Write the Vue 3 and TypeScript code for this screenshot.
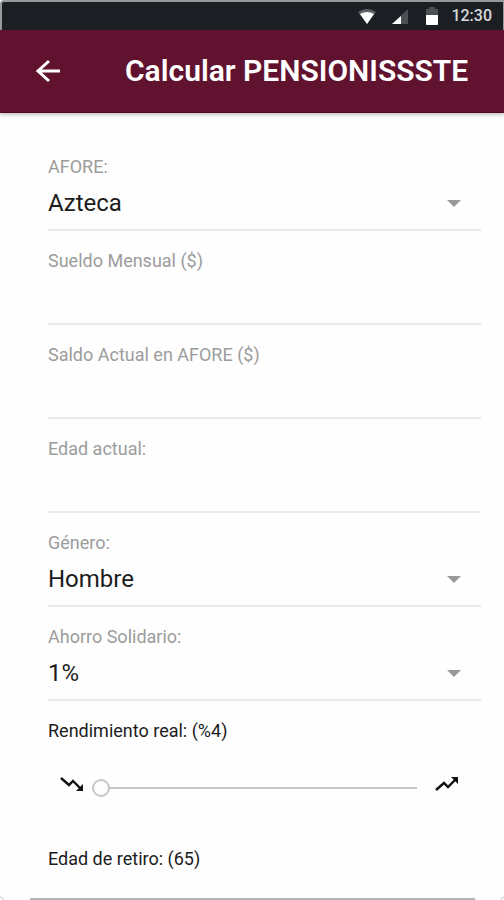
<script setup lang="ts">
import { ref } from 'vue'

interface SelectField {
  kind: 'select'
  id: string
  label: string
  options: string[]
}
interface InputField {
  kind: 'input'
  id: string
  label: string
}
type Field = SelectField | InputField

const fields: Field[] = [
  { kind: 'select', id: 'afore', label: 'AFORE:', options: ['Azteca'] },
  { kind: 'input', id: 'sueldo', label: 'Sueldo Mensual ($)' },
  { kind: 'input', id: 'saldo', label: 'Saldo Actual en AFORE ($)' },
  { kind: 'input', id: 'edad', label: 'Edad actual:' },
  { kind: 'select', id: 'genero', label: 'Género:', options: ['Hombre'] },
  { kind: 'select', id: 'ahorro', label: 'Ahorro Solidario:', options: ['1%'] },
]

const values = ref<Record<string, string>>({
  afore: 'Azteca',
  sueldo: '',
  saldo: '',
  edad: '',
  genero: 'Hombre',
  ahorro: '1%',
})
const rendimiento = ref(4)
const retiro = ref(65)
</script>

<template>
  <div class="screen">
    <div class="status">
      <svg class="wifi" viewBox="0 0 18 15" width="18" height="15">
        <path d="M0 3Q9-3 18 3L9 15Z" fill="#5c6064" />
        <path d="M2 5Q9 1 16 5L9 15Z" fill="#fff" />
      </svg>
      <svg class="signal" viewBox="0 0 16 15" width="16" height="15">
        <path d="M16 0V15H0Z" fill="#4c5054" />
        <path d="M9 7V15H0Z" fill="#fff" />
      </svg>
      <svg class="battery" viewBox="0 0 14 18" width="14" height="18">
        <path d="M4 0H10V2H13V9H1V2H4Z" fill="#4c5054" />
        <path d="M1 8H13V17Q13 18 12 18H2Q1 18 1 17Z" fill="#fff" />
      </svg>
      <span class="clock">12:30</span>
    </div>

    <header class="bar">
      <button class="back" type="button" aria-label="Regresar">
        <svg viewBox="0 0 26 24" width="26" height="24">
          <path d="M14 2L3 12L14 22M3 12H25" fill="none" stroke="#fff" stroke-width="3" />
        </svg>
      </button>
      <h1>Calcular PENSIONISSSTE</h1>
    </header>

    <main class="form">
      <div v-for="field in fields" :key="field.id" class="field">
        <label :for="field.id">{{ field.label }}</label>
        <div v-if="field.kind === 'select'" class="picker">
          <select :id="field.id" v-model="values[field.id]">
            <option v-for="option in field.options" :key="option">{{ option }}</option>
          </select>
          <svg viewBox="0 0 14 7" width="14" height="7">
            <path d="M0 0H14L7 7Z" fill="#999" />
          </svg>
        </div>
        <input v-else :id="field.id" v-model="values[field.id]" type="text" inputmode="decimal" />
      </div>

      <div class="range">
        <label for="rendimiento">Rendimiento real: (%{{ rendimiento }})</label>
        <div class="track">
          <svg viewBox="0 0 24 14" width="24" height="14">
            <path d="M1 1L9 8L13 4L20 11" fill="none" stroke="#111" stroke-width="2.4" />
            <path d="M23 7V14H16Z" fill="#111" />
          </svg>
          <input id="rendimiento" v-model.number="rendimiento" type="range" min="4" max="12" />
          <svg viewBox="0 0 24 14" width="24" height="14">
            <path d="M1 13L9 6L13 10L20 3" fill="none" stroke="#111" stroke-width="2.4" />
            <path d="M16 0H23V7Z" fill="#111" />
          </svg>
        </div>
      </div>

      <p class="retiro">Edad de retiro: ({{ retiro }})</p>
    </main>

    <div class="edge">
      <svg viewBox="0 0 4 4" width="4" height="4">
        <path d="M0 1Q2 1 4 4" fill="none" stroke="#c4c4c4" />
      </svg>
      <span class="line"></span>
      <svg viewBox="0 0 4 4" width="4" height="4">
        <path d="M4 1Q2 1 1 4" fill="none" stroke="#c4c4c4" />
      </svg>
    </div>
  </div>
</template>

<style>
body {
  background: #fefefe;
}
</style>

<style scoped>
.screen {
  font-family: Roboto, 'Liberation Sans', sans-serif;
  color: #1c1c1c;
}
.status {
  display: flex;
  align-items: center;
  justify-content: flex-end;
  box-sizing: border-box;
  height: 30px;
  padding-right: 11px;
  border-top: 2px solid #969a9d;
  border-left: 2px solid #969a9d;
  border-right: 1px solid #969a9d;
  border-top-left-radius: 4px;
  background: #1b1f24;
}
.signal {
  margin-left: 16px;
}
.battery {
  margin-left: 17px;
}
.clock {
  margin-left: 12px;
  font-size: 16px;
  line-height: 28px;
  font-weight: 500;
  color: #d8d9da;
}
.bar {
  display: flex;
  align-items: center;
  box-sizing: border-box;
  height: 83px;
  padding: 0 36px 0 35px;
  background: #61122f;
  border-bottom: 1px solid #4a0a18;
  box-shadow: 0 2px 4px rgba(0, 0, 0, 0.24);
}
.back {
  display: flex;
  padding: 0;
  border: 0;
  background: none;
}
h1 {
  margin: 0 0 0 64px;
  font-size: 30px;
  line-height: 42px;
  font-weight: 600;
  color: #fff;
  white-space: nowrap;
}
.form {
  padding: 24px 23px 0 48px;
}
.field {
  display: flex;
  flex-direction: column;
  box-sizing: border-box;
  height: 94px;
  padding-top: 18px;
  border-bottom: 2px solid #e9e9e9;
}
.field label {
  font-size: 18px;
  line-height: 24px;
  color: #9c9c9c;
}
.picker {
  display: flex;
  align-items: center;
  margin-top: 4px;
  padding-right: 20px;
}
select,
.field input {
  flex: 1;
  min-width: 0;
  height: 40px;
  padding: 0;
  border: 0;
  outline: 0;
  appearance: none;
  background: none;
  font-family: inherit;
  font-size: 24px;
  color: #1c1c1c;
}
.range {
  padding-top: 18px;
}
.range label,
.retiro {
  display: block;
  margin: 0;
  font-size: 18px;
  line-height: 24px;
}
.track {
  display: flex;
  align-items: flex-start;
  margin-top: 34px;
  padding: 0 22px 0 12px;
}
.track input {
  flex: 1;
  min-width: 0;
  height: 22px;
  margin: 0 18px 0 8px;
  appearance: none;
  background: linear-gradient(#c6c6c6, #c6c6c6) center / 100% 2px no-repeat;
}
.track input::-webkit-slider-thumb {
  appearance: none;
  box-sizing: border-box;
  width: 18px;
  height: 18px;
  border: 2px solid #c6c6c6;
  border-radius: 50%;
  background: #fefefe;
}
.retiro {
  margin-top: 48px;
}
.edge {
  display: flex;
  align-items: flex-end;
  justify-content: space-between;
  margin-top: 25px;
}
.line {
  flex: 1;
  height: 2px;
  margin: 0 25px 0 26px;
  background: #b4b4b4;
}
</style>
